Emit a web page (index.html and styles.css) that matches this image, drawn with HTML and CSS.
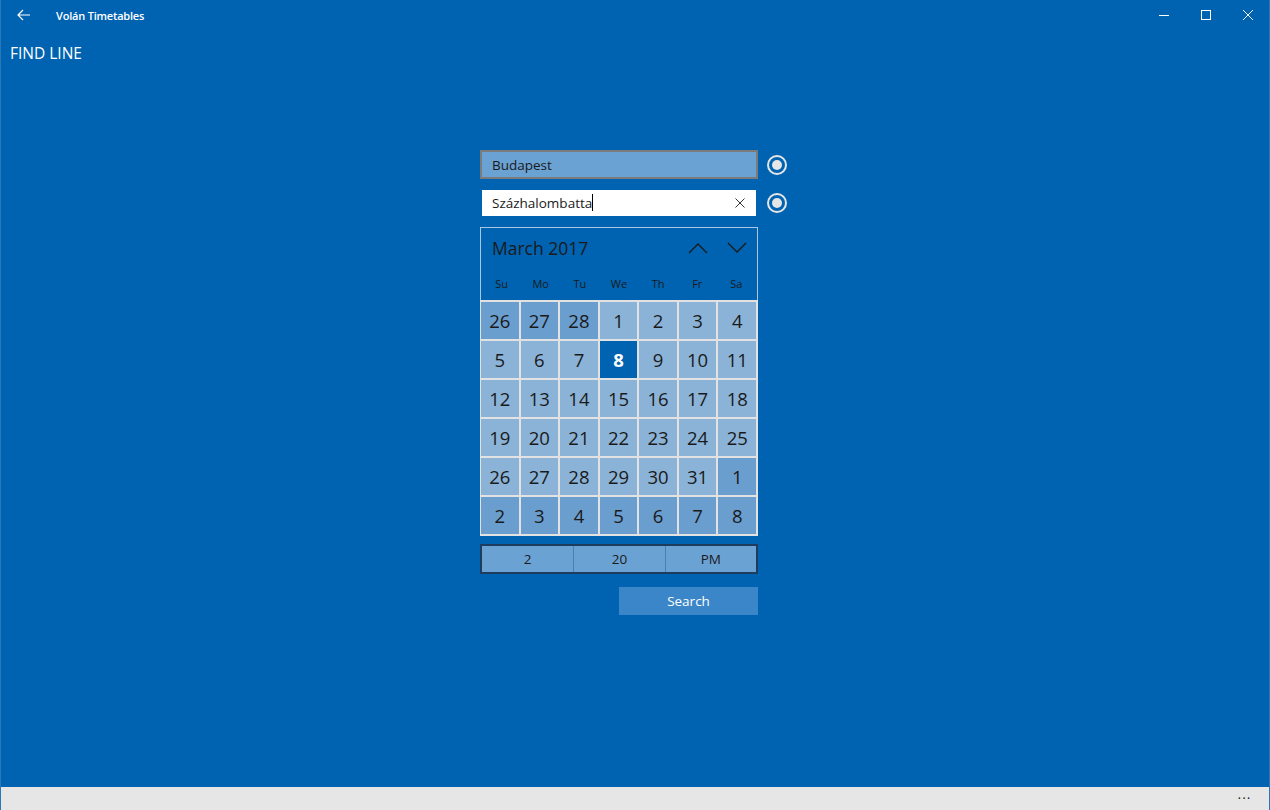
FILE: index.html
```html
<!DOCTYPE html>
<html lang="hu">
<head>
  <meta charset="UTF-8" />
  <title>Volán Timetables</title>
  <link rel="stylesheet" href="styles.css">
</head>
<body>
  <div class="window">
    <div class="titlebar">
      <div class="title-left">
        <span class="back">
          <svg width="14" height="12" viewBox="0 0 14 12"><path d="M6 1 L1 6 L6 11 M1 6 H13" fill="none" stroke="#fff" stroke-width="1.2"/></svg>
        </span>
        <span class="app-name">Volán Timetables</span>
      </div>
      <div class="win-controls">
        <span class="ctl"><svg width="10" height="10" viewBox="0 0 10 10"><path d="M0 5.5 H10" stroke="#fff" stroke-width="1"/></svg></span>
        <span class="ctl"><svg width="10" height="10" viewBox="0 0 10 10"><rect x="0.5" y="0.5" width="9" height="9" fill="none" stroke="#fff" stroke-width="1"/></svg></span>
        <span class="ctl"><svg width="10" height="10" viewBox="0 0 10 10"><path d="M0 0 L10 10 M10 0 L0 10" stroke="#fff" stroke-width="1"/></svg></span>
      </div>
    </div>

    <h1 class="page-title">FIND LINE</h1>

    <main class="form">
      <div class="field-row">
        <div class="input input-from">Budapest</div>
        <span class="radio"></span>
      </div>
      <div class="field-row">
        <div class="input input-to">
          <span class="value">Százhalombatta<span class="caret"></span></span>
          <svg class="clear" width="10" height="10" viewBox="0 0 10 10"><path d="M0.5 0.5 L9.5 9.5 M9.5 0.5 L0.5 9.5" stroke="#333" stroke-width="1"/></svg>
        </div>
        <span class="radio"></span>
      </div>

      <div class="calendar">
        <div class="cal-head">
          <span class="month">March 2017</span>
          <span class="nav">
            <svg width="20" height="12" viewBox="0 0 20 12"><path d="M1 11 L10 2 L19 11" fill="none" stroke="#1a1a1a" stroke-width="1.3"/></svg>
            <svg width="20" height="12" viewBox="0 0 20 12"><path d="M1 1 L10 10 L19 1" fill="none" stroke="#1a1a1a" stroke-width="1.3"/></svg>
          </span>
        </div>
        <div class="weekdays">
          <span>Su</span><span>Mo</span><span>Tu</span><span>We</span><span>Th</span><span>Fr</span><span>Sa</span>
        </div>
        <div class="days" id="days"></div>
      </div>

      <div class="time-picker">
        <span>2</span>
        <span>20</span>
        <span>PM</span>
      </div>

      <div class="actions">
        <button class="search-btn">Search</button>
      </div>
    </main>

    <div class="appbar">
      <span class="more">•••</span>
    </div>
  </div>

  <script>
    // rács: 6 sor, előző/következő hónap napjai sötétebbek
    var days = [];
    [26, 27, 28].forEach(function (d) { days.push({ n: d, out: true }); });
    for (var i = 1; i <= 31; i++) days.push({ n: i, out: false, sel: i === 8 });
    for (var j = 1; j <= 8; j++) days.push({ n: j, out: true });

    var html = '';
    days.forEach(function (d) {
      var cls = 'day';
      if (d.out) cls += ' out';
      if (d.sel) cls += ' selected';
      html += '<span class="' + cls + '">' + d.n + '</span>';
    });
    document.getElementById('days').innerHTML = html;
  </script>
</body>
</html>
```

FILE: styles.css
```css
:root {
  --accent: #0063b1;
  --cell: #8bb3d7;
  --cell-out: #6a9ece;
  --grid-line: #e2e2e2;
  --text-dark: #1a1a1a;
}

* {
  box-sizing: border-box;
  margin: 0;
  padding: 0;
}

html, body {
  height: 100%;
}

body {
  font-family: "Open Sans", "Noto Sans", "Liberation Sans", sans-serif;
  background: var(--accent);
  color: #fff;
  overflow: hidden;
}

.window {
  height: 810px;
  display: flex;
  flex-direction: column;
  border-left: 1px solid #2a78bb;
  border-right: 1px solid #2a78bb;
}

.titlebar {
  height: 30px;
  display: flex;
  justify-content: space-between;
  align-items: center;
  flex-shrink: 0;
}

.title-left {
  display: flex;
  align-items: center;
}

.back {
  width: 46px;
  display: flex;
  justify-content: center;
}

.app-name {
  font-size: 11px;
  margin-left: 9px;
  font-weight: 600;
  letter-spacing: -0.2px;
}

.win-controls {
  display: flex;
}

.ctl {
  width: 42px;
  height: 30px;
  display: flex;
  align-items: center;
  justify-content: center;
}

.page-title {
  font-size: 15.5px;
  font-weight: 400;
  padding: 12px 9px 0;
  height: 120px;
}

.form {
  width: 310px;
  margin: 0 auto;
  flex: 1;
}

.field-row {
  display: flex;
  align-items: center;
  gap: 9px;
  margin-bottom: 9px;
}

.input {
  width: 278px;
  height: 30px;
  font-size: 13.5px;
  color: var(--text-dark);
  display: flex;
  align-items: center;
  padding: 0 10px;
}

.input-from {
  height: 29px;
  background: #6aa2d3;
  border: 2px solid #7b7b7b;
}

.input-to {
  background: #fff;
  border: 2px solid var(--accent);
  justify-content: space-between;
}

.caret {
  display: inline-block;
  width: 1px;
  height: 17px;
  background: #000;
  vertical-align: middle;
  margin-top: -3px;
}

.clear {
  margin-right: 1px;
}

.radio {
  width: 20px;
  height: 20px;
  border: 2px solid #e6e6e6;
  border-radius: 50%;
  display: flex;
  align-items: center;
  justify-content: center;
}

.radio::after {
  content: "";
  width: 10px;
  height: 10px;
  border-radius: 50%;
  background: #e6e6e6;
}

.calendar {
  width: 278px;
  border: 1px solid #a9c6e2;
  border-bottom: none;
}

.cal-head {
  display: flex;
  justify-content: space-between;
  align-items: center;
  height: 40px;
  padding: 0 10px 0 11px;
  color: var(--text-dark);
}

.month {
  font-size: 17.5px;
}

.nav {
  display: flex;
  gap: 19px;
}

.weekdays {
  display: grid;
  grid-template-columns: repeat(7, 1fr);
  height: 32px;
  align-items: center;
  text-align: center;
  font-size: 11px;
  color: var(--text-dark);
  padding: 0 1px 2px;
}

.days {
  display: grid;
  grid-template-columns: repeat(7, 1fr);
  grid-auto-rows: 37px;
  gap: 2px;
  padding: 2px 2px 2px 1px;
  margin-left: -1px;
  margin-right: -1px;
  background: var(--grid-line);
}

.day {
  background: var(--cell);
  color: var(--text-dark);
  font-size: 18.5px;
  display: flex;
  align-items: center;
  justify-content: center;
  padding-bottom: 1px;
}

.day.out {
  background: var(--cell-out);
}

.day.selected {
  background: var(--accent);
  color: #fff;
  font-weight: 700;
}

.time-picker {
  width: 278px;
  height: 30px;
  margin-top: 8px;
  display: grid;
  grid-template-columns: repeat(3, 1fr);
  border: 2px solid #1d3c5e;
  background: #6aa2d3;
  color: var(--text-dark);
  font-size: 13.5px;
}

.time-picker span {
  display: flex;
  align-items: center;
  justify-content: center;
}

.time-picker span + span {
  border-left: 1px solid #4b7fae;
}

.actions {
  width: 278px;
  display: flex;
  justify-content: flex-end;
  margin-top: 13px;
}

.search-btn {
  width: 139px;
  height: 28px;
  border: none;
  background: #3a86c8;
  color: #fff;
  font-family: inherit;
  font-size: 13.5px;
}

.appbar {
  height: 23px;
  background: #e6e6e6;
  display: flex;
  justify-content: flex-end;
  align-items: center;
  padding-right: 17px;
  flex-shrink: 0;
}

.more {
  color: #222;
  font-size: 7px;
  letter-spacing: 2px;
}
```
